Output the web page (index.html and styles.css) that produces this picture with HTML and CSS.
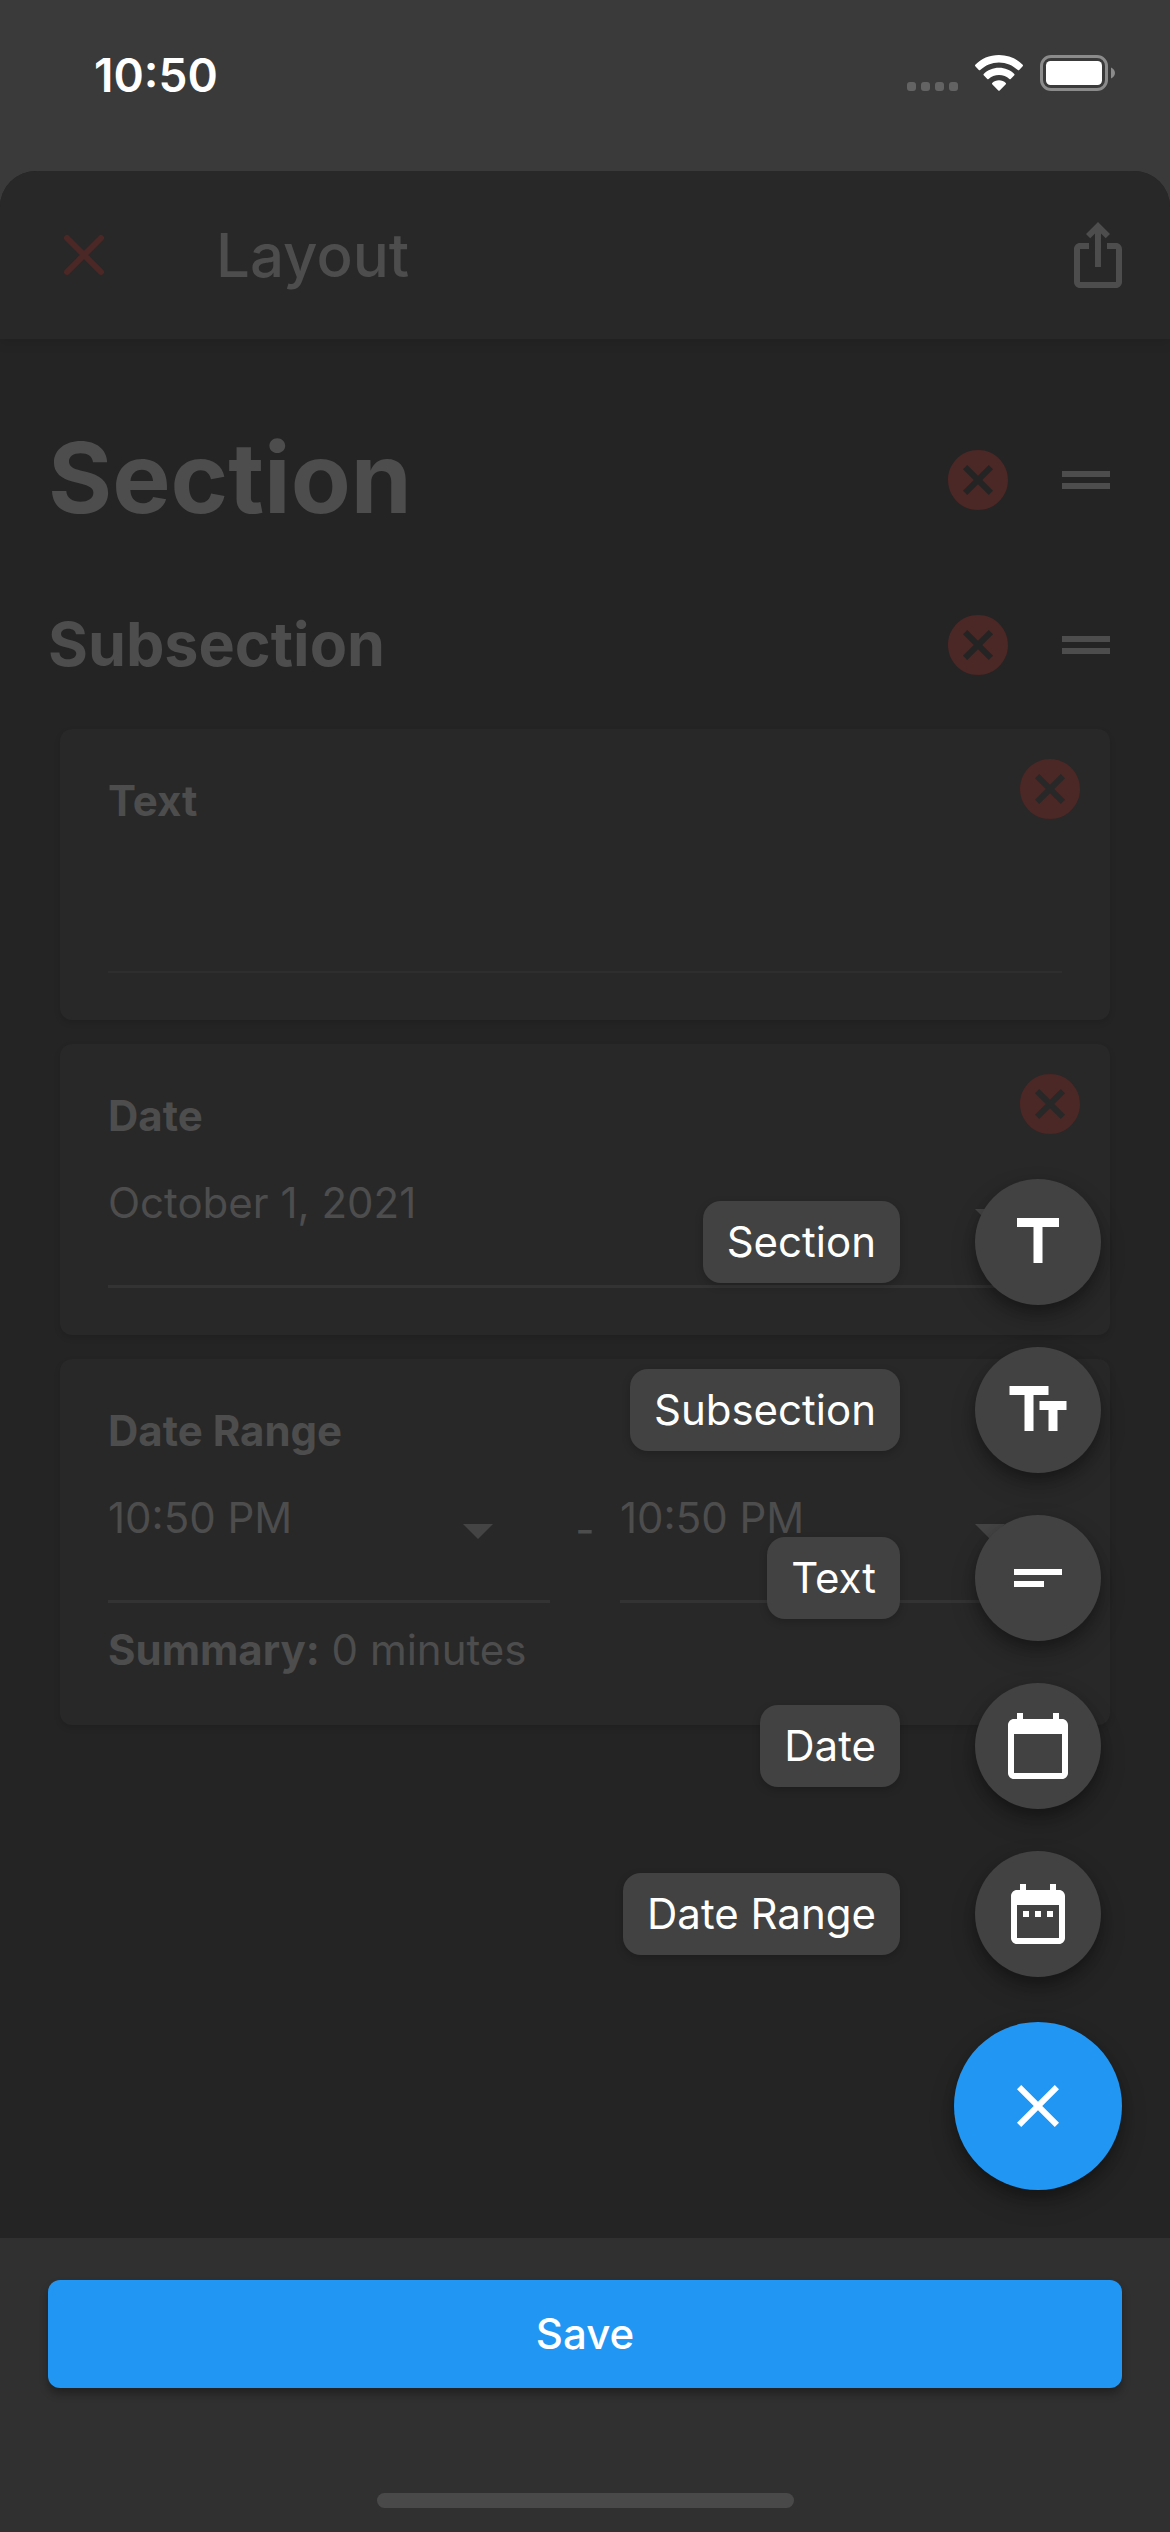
FILE: index.html
```html
<!DOCTYPE html>
<html lang="en">
<head>
<meta charset="utf-8">
<meta name="viewport" content="width=device-width, initial-scale=1">
<title>Layout</title>
<link rel="stylesheet" href="styles.css">
</head>
<body>
<svg class="defs" aria-hidden="true">
  <symbol id="cancel" viewBox="0 0 24 24"><path d="M12 2C6.47 2 2 6.47 2 12s4.47 10 10 10 10-4.47 10-10S17.53 2 12 2zm5 13.59L15.59 17 12 13.41 8.41 17 7 15.59 10.59 12 7 8.41 8.41 7 12 10.59 15.59 7 17 8.41 13.41 12 17 15.59z"/></symbol>
  <symbol id="drag" viewBox="0 0 24 24"><path d="M20 9H4v2h16V9zM4 15h16v-2H4v2z"/></symbol>
  <symbol id="arrow" viewBox="0 0 24 24"><path d="M7 10l5 5 5-5z"/></symbol>
</svg>

<div class="status">
  <time class="clock">10:50</time>
  <div class="indicators">
    <span class="signal"><i></i><i></i><i></i><i></i></span>
    <svg class="wifi" viewBox="0 0 48 36" aria-label="Wi-Fi">
      <path d="M24 0C33.500 0 42 3.700 47.700 9.800C48.100 10.300 48.100 10.800 47.700 11.200L44.200 15C43.800 15.400 43.200 15.400 42.800 15C37.800 10.200 31.200 7.400 24 7.400S10.200 10.200 5.200 15C4.800 15.400 4.200 15.400 3.800 15L.3 11.200C-.1 10.800-.1 10.300.3 9.800C6 3.700 14.500 0 24 0z"/>
      <path d="M24 12.800C30 12.800 35.400 15.100 39.300 18.900C39.700 19.300 39.700 19.800 39.300 20.200L35.700 24C35.300 24.400 34.800 24.400 34.400 24C31.700 21.600 28 20.100 24 20.100S16.300 21.600 13.600 24C13.200 24.400 12.700 24.400 12.300 24L8.700 20.200C8.300 19.800 8.300 19.300 8.700 18.900C12.600 15.100 18 12.800 24 12.800z"/>
      <path d="M24 25.200C26.600 25.200 29 26.200 30.800 27.900C31.200 28.300 31.200 28.800 30.800 29.200L24.700 35.500C24.300 35.900 23.700 35.900 23.300 35.500L17.200 29.200C16.800 28.800 16.800 28.300 17.200 27.900C19 26.200 21.400 25.200 24 25.200z"/>
    </svg>
    <svg class="battery" viewBox="0 0 75 36" aria-label="Battery full">
      <rect class="shell" x="1.500" y="1.500" width="65" height="33" rx="9.500"/>
      <rect x="6" y="6" width="56" height="24" rx="4.500"/>
      <path class="tip" d="M71 12.500c2.400.9 4 3 4 5.500s-1.600 4.600-4 5.500z"/>
    </svg>
  </div>
</div>

<div class="sheet">
  <header class="bar">
    <button class="icon-btn danger" aria-label="Close">
      <svg viewBox="0 0 72 72"><path class="cross" d="M19 19L53 53M53 19L19 53"/></svg>
    </button>
    <h1 class="title">Layout</h1>
    <button class="icon-btn" aria-label="Share">
      <svg viewBox="0 0 24 24"><path d="M16 5l-1.420 1.420-1.590-1.590V16h-1.980V4.830L9.420 6.420 8 5l4-4 4 4zm4 5v11c0 1.100-.9 2-2 2H6c-1.110 0-2-.9-2-2V10c0-1.110.89-2 2-2h3v2H6v11h12V10h-3V8h3c1.100 0 2 .89 2 2z"/></svg>
    </button>
  </header>

  <main class="content">
    <div class="heading">
      <h2 class="section">Section</h2>
      <button class="icon-btn danger" aria-label="Remove section"><svg><use href="#cancel"/></svg></button>
      <button class="icon-btn" aria-label="Move section"><svg><use href="#drag"/></svg></button>
    </div>
    <div class="heading">
      <h3 class="subsection">Subsection</h3>
      <button class="icon-btn danger" aria-label="Remove subsection"><svg><use href="#cancel"/></svg></button>
      <button class="icon-btn" aria-label="Move subsection"><svg><use href="#drag"/></svg></button>
    </div>

    <div class="cards">
      <section class="card">
        <label class="name" for="text">Text</label>
        <div class="field"><input class="value faint" id="text" type="text"></div>
        <button class="icon-btn danger remove" aria-label="Remove text"><svg><use href="#cancel"/></svg></button>
      </section>

      <section class="card">
        <label class="name" for="date">Date</label>
        <div class="field">
          <select class="value" id="date"><option>October 1, 2021</option></select>
          <svg class="arrow"><use href="#arrow"/></svg>
        </div>
        <button class="icon-btn danger remove" aria-label="Remove date"><svg><use href="#cancel"/></svg></button>
      </section>

      <section class="card">
        <label class="name" for="from">Date Range</label>
        <div class="range">
          <div class="field">
            <select class="value" id="from"><option>10:50 PM</option></select>
            <svg class="arrow"><use href="#arrow"/></svg>
          </div>
          <span class="dash">-</span>
          <div class="field">
            <select class="value" aria-label="Range end"><option>10:50 PM</option></select>
            <svg class="arrow"><use href="#arrow"/></svg>
          </div>
        </div>
        <p class="summary"><b>Summary:</b> 0 minutes</p>
        <button class="icon-btn danger remove" aria-label="Remove date range"><svg><use href="#cancel"/></svg></button>
      </section>
    </div>

    <div class="dial">
      <button class="action"><span class="tag">Section</span><span class="disc"><svg viewBox="0 0 24 24"><path d="M5 4v3h5.500v12h3V7H19V4z"/></svg></span></button>
      <button class="action"><span class="tag">Subsection</span><span class="disc"><svg viewBox="0 0 24 24"><path d="M2.500 4v3h5v12h3V7h5V4h-13zm19 5h-9v3h3v7h3v-7h3V9z"/></svg></span></button>
      <button class="action"><span class="tag">Text</span><span class="disc"><svg viewBox="0 0 24 24"><path d="M4 9h16v2H4V9zm0 4h10v2H4v-2z"/></svg></span></button>
      <button class="action"><span class="tag">Date</span><span class="disc"><svg viewBox="0 0 24 24"><path d="M20 3h-1V1h-2v2H7V1H5v2H4c-1.100 0-2 .9-2 2v16c0 1.100.9 2 2 2h16c1.100 0 2-.9 2-2V5c0-1.100-.9-2-2-2zm0 18H4V8h16v13z"/></svg></span></button>
      <button class="action"><span class="tag">Date Range</span><span class="disc"><svg viewBox="0 0 24 24"><path d="M9 11H7v2h2v-2zm4 0h-2v2h2v-2zm4 0h-2v2h2v-2zm2-7h-1V2h-2v2H8V2H6v2H5c-1.110 0-1.990.9-1.990 2L3 20c0 1.100.89 2 2 2h14c1.100 0 2-.9 2-2V6c0-1.100-.9-2-2-2zm0 16H5V9h14v11z"/></svg></span></button>
      <button class="fab" aria-label="Close menu"><svg viewBox="0 0 24 24"><path d="M19 6.410L17.590 5 12 10.590 6.410 5 5 6.410 10.590 12 5 17.590 6.410 19 12 13.410 17.590 19 19 17.590 13.410 12z"/></svg></button>
    </div>
  </main>

  <footer class="footer">
    <button class="save">Save</button>
    <div class="home"></div>
  </footer>
</div>
</body>
</html>
```
FILE: styles.css
```css
:root {
  --text: #4d4d4d;
  --danger: #4b2725;
  --line: #333333;
  --line-faint: #2e2e2e;
  --surface: #282828;
  --raised: #424242;
  --blue: #2196f3;
}

* { box-sizing: border-box; }

body {
  margin: 0;
  min-height: 100vh;
  display: flex;
  flex-direction: column;
  background: #3a3a3a;
  color: var(--text);
  font-family: Inter, "Liberation Sans", sans-serif;
  font-size: 42px;
  line-height: 48px;
}

h1, h2, h3, p { margin: 0; }

button {
  padding: 0;
  border: 0;
  background: none;
  color: inherit;
  font: inherit;
}

svg { display: block; fill: currentColor; }

.defs { position: absolute; width: 0; height: 0; }

/* Status bar */
.status {
  display: flex;
  justify-content: space-between;
  align-items: flex-start;
  padding: 48px 55px 69px 94px;
  color: #fff;
}

.clock { font-size: 46px; line-height: 54px; font-weight: 600; }

.indicators { display: flex; align-items: flex-end; padding-top: 7px; }

.signal { display: flex; gap: 5px; margin-right: 17px; }
.signal i { width: 9px; height: 9px; border-radius: 3px; background: #636363; }

.wifi { width: 48px; height: 36px; margin-right: 17px; }
.battery { width: 75px; height: 36px; }
.shell { fill: none; stroke: #8b8b8b; stroke-width: 3; }
.tip { fill: #8b8b8b; }

/* Sheet */
.sheet {
  flex: 1;
  display: flex;
  flex-direction: column;
  overflow: hidden;
  border-radius: 36px 36px 0 0;
  background: #242424;
}

.bar {
  display: flex;
  align-items: center;
  padding: 48px 36px 48px 48px;
  background: var(--surface);
  box-shadow: 0 3px 12px rgba(0, 0, 0, 0.12);
}

.title {
  flex: 1;
  padding-left: 96px;
  font-size: 60px;
  line-height: 72px;
  font-weight: 500;
}

.icon-btn { width: 72px; height: 72px; }
.icon-btn svg, .arrow { width: 72px; height: 72px; }
.danger { color: var(--danger); }
.cross { stroke: currentColor; stroke-width: 6; stroke-linecap: round; }

.content {
  position: relative;
  flex: 1;
  padding-top: 60px;
}

.heading {
  display: flex;
  align-items: center;
  padding: 0 48px;
}

.heading h2, .heading h3 { flex: 1; font-weight: 700; }
.heading .danger { margin-right: 36px; }
.section { padding: 22px 0 26px; font-size: 98px; line-height: 114px; }
.subsection { padding: 47px 0 49px; font-size: 61px; line-height: 72px; }

/* Cards */
.cards {
  display: flex;
  flex-direction: column;
  gap: 24px;
  padding: 0 60px;
}

.card {
  position: relative;
  padding: 48px 48px 47px;
  border-radius: 12px;
  background: var(--surface);
  box-shadow: 0 3px 6px rgba(0, 0, 0, 0.12);
}

.name { display: block; font-weight: 700; }
.remove { position: absolute; top: 24px; right: 24px; }

.field { display: grid; align-items: start; }

.value {
  grid-area: 1 / 1;
  width: 100%;
  height: 148px;
  margin: 0;
  padding: 39px 0 58px;
  border: 0;
  border-bottom: 3px solid var(--line);
  border-radius: 0;
  background: none;
  color: inherit;
  font: inherit;
  appearance: none;
}

.faint { border-bottom: 2px solid var(--line-faint); }

.arrow {
  grid-area: 1 / 1;
  justify-self: end;
  margin: 39px 36px 0 0;
  color: #444444;
  pointer-events: none;
}

.range { display: grid; grid-template-columns: 1fr 70px 1fr; }
.dash { padding-top: 51px; text-align: center; }
.summary { padding: 23px 0 4px; }

/* Speed dial over the form */
.dial {
  position: absolute;
  right: 48px;
  bottom: 48px;
  display: flex;
  flex-direction: column;
  align-items: flex-end;
  gap: 42px;
  color: #fff;
}

.action {
  display: flex;
  align-items: center;
  gap: 75px;
  margin-right: 21px;
}

.tag {
  padding: 16px 24px;
  border-radius: 18px;
  background: var(--raised);
  line-height: 50px;
  box-shadow: 0 3px 9px rgba(0, 0, 0, 0.2);
}

.disc, .fab {
  display: grid;
  place-items: center;
  border-radius: 50%;
  box-shadow: 0 12px 24px rgba(0, 0, 0, 0.25), 0 6px 12px rgba(0, 0, 0, 0.2);
}

.disc { width: 126px; height: 126px; background: var(--raised); }
.fab { width: 168px; height: 168px; margin-top: 3px; background: var(--blue); }
.disc svg, .fab svg { width: 72px; height: 72px; }

/* Footer */
.footer {
  display: flex;
  flex-direction: column;
  padding: 42px 48px 24px;
  background: #303030;
}

.save {
  padding: 30px;
  border-radius: 12px;
  background: var(--blue);
  color: #fff;
  font-weight: 500;
  box-shadow: 0 6px 9px rgba(0, 0, 0, 0.3);
}

.home {
  align-self: center;
  width: 417px;
  height: 15px;
  margin-top: 105px;
  border-radius: 8px;
  background: #494949;
}
```
